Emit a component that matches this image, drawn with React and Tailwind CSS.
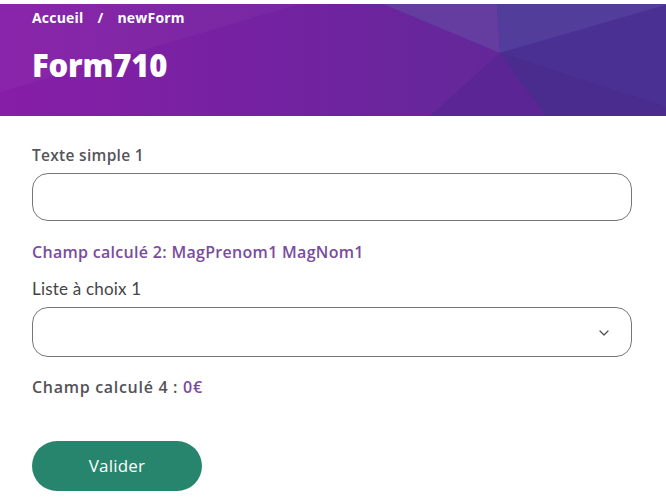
import { ChevronDown } from "lucide-react"

const Banner = () => (
  <svg
    className="absolute inset-0 h-full w-full"
    viewBox="0 0 666 112"
    preserveAspectRatio="none"
    aria-hidden="true"
  >
    <defs>
      <linearGradient id="leftWash" x1="0" y1="0" x2="1" y2="0">
        <stop offset="0" stopColor="#871ea8" />
        <stop offset="0.55" stopColor="#7322a0" />
        <stop offset="1" stopColor="#63289a" />
      </linearGradient>
    </defs>
    <rect width="666" height="112" fill="#4b2d92" />
    <polygon points="0,0 383,0 500,49 430,112 0,112" fill="url(#leftWash)" />
    <polygon points="0,0 300,0 0,88" fill="#ffffff" opacity="0.03" />
    <polygon points="383,0 497,0 500,49" fill="#653c9f" />
    <polygon points="497,0 666,0 666,1 500,49" fill="#533d9b" />
    <polygon points="666,1 666,103 500,49" fill="#4a3093" />
    <polygon points="500,49 666,103 666,112 546,112" fill="#4a2b8e" />
    <polygon points="500,49 546,112 430,112" fill="#5c2596" />
  </svg>
)

const App = () => {
  return (
    <div className="min-h-[499px] bg-white pt-[4px] font-['Open_Sans',sans-serif]">
      <header className="relative h-[112px] overflow-hidden">
        <Banner />
        <div className="relative px-[32px] pt-[5px] text-white">
          <nav className="flex items-center gap-[14px] text-[14px] font-bold leading-[18px] tracking-[0.2px]">
            <span>Accueil</span>
            <span>/</span>
            <span>newForm</span>
          </nav>
          <h1 className="mt-[19px] text-[31px] font-extrabold leading-[38px] tracking-[-0.2px]">
            Form710
          </h1>
        </div>
      </header>

      <main className="flex flex-col px-[32px] pt-[29px]">
        <label className="text-[15.5px] font-semibold leading-[20px] tracking-[0.3px] text-[#55555a]">
          Texte simple 1
        </label>
        <input
          type="text"
          className="mt-[8px] h-[48px] w-[600px] rounded-[16px] border border-[#767676] bg-white px-4 outline-none"
        />

        <p className="mt-[21px] text-[16px] font-semibold leading-[20px] tracking-[0.3px] text-[#7a4c9c]">
          Champ calculé 2: MagPrenom1 MagNom1
        </p>

        <label className="mt-[17px] font-['Lato',sans-serif] text-[17px] leading-[20px] tracking-[0.2px] text-[#444446]">
          Liste à choix 1
        </label>
        <div className="relative mt-[8px] h-[50px] w-[600px] rounded-[16px] border border-[#767676] bg-white">
          <ChevronDown
            className="absolute right-[19px] top-[17px] text-[#555]"
            size={16}
            strokeWidth={2}
          />
        </div>

        <p className="mt-[20px] text-[16px] font-semibold leading-[20px] tracking-[0.7px] text-[#525257]">
          Champ calculé 4 : <span className="text-[#7a4c9c]">0€</span>
        </p>

        <button className="mt-[44px] flex h-[50px] w-[170px] items-center justify-center rounded-full bg-[#27856e] text-[17px] tracking-[0.2px] text-white">
          Valider
        </button>
      </main>
    </div>
  )
}

export default App
